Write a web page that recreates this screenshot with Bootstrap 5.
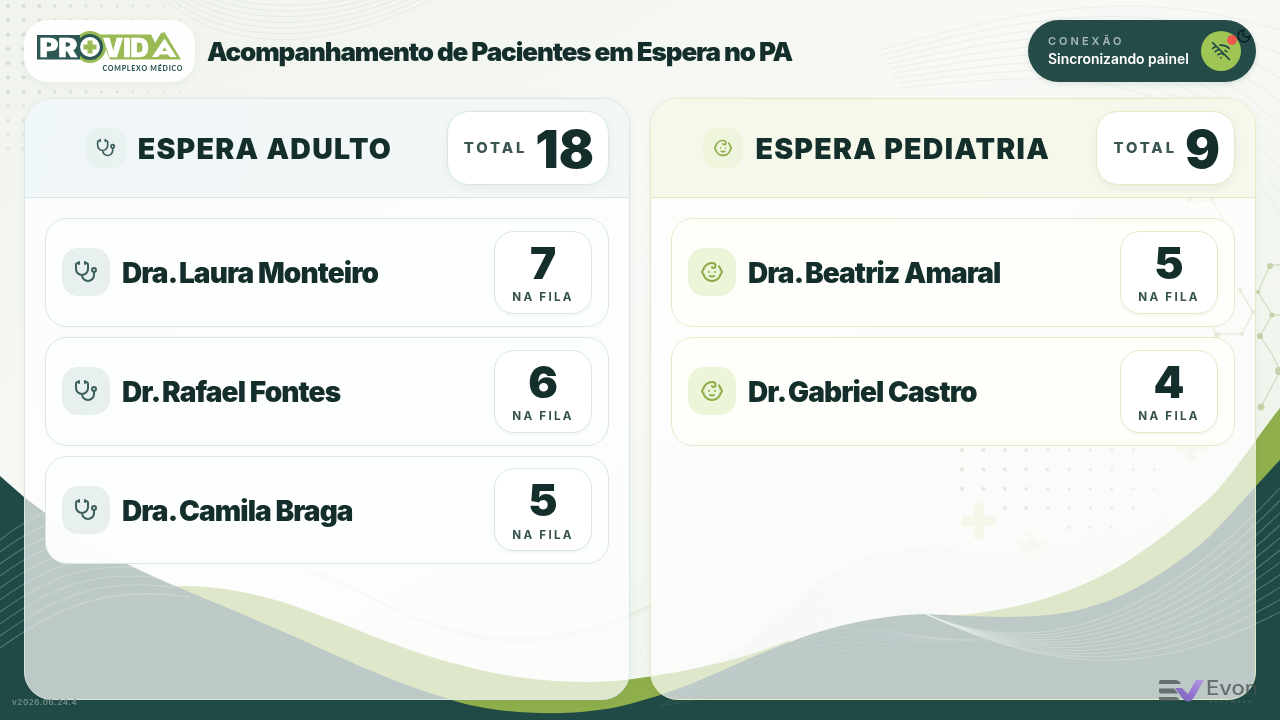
<!DOCTYPE html>
<html lang="pt-BR">
<head>
<meta charset="utf-8">
<meta name="viewport" content="width=device-width, initial-scale=1">
<title>Acompanhamento de Pacientes em Espera no PA</title>
<link rel="stylesheet" href="https://cdn.jsdelivr.net/npm/bootstrap@5.3.0/dist/css/bootstrap.min.css">
<style>
:root{--ink:#142f2b;--deep:#244b47;--line:#d9e6e6}
body{width:1280px;height:720px;overflow:hidden;font-family:Inter,sans-serif;color:var(--ink);background:#f5f7f2}
.scene{position:absolute;inset:0;z-index:-1}
.page{height:720px;padding:20px 24px}
.topbar{height:62px;margin-bottom:16px}
.logo-box{width:171px;height:62px;border-radius:24px;background:rgba(255,255,255,.9);box-shadow:0 3px 10px rgba(31,74,69,.06)}
.page-title{font-size:26px;font-weight:900;letter-spacing:-1.11px;margin-left:12px;padding-top:1px}
.conn{width:228px;height:62px;border-radius:31px;background:var(--deep);padding:0 15px 0 20px;color:#fff;box-shadow:0 2px 6px rgba(31,74,69,.12)}
.conn-label{font-size:11px;font-weight:600;letter-spacing:3px;line-height:14px;color:#a8b9b6}
.conn-text{font-size:13.9px;font-weight:600;line-height:20px;padding-top:1px}
.conn-icon{width:40px;height:40px;background:#9fc654;color:var(--deep)}
.conn-dot{position:absolute;right:4px;top:4px;width:10px;height:10px;background:#ee584c}
.moon{position:absolute;left:1236px;top:28px;color:#061d22}
.panels{height:602px;gap:20px}
.panel{flex:1 1 0;border:1px solid var(--line);border-radius:28px;background:rgba(255,255,255,.7);overflow:hidden;box-shadow:0 2px 8px rgba(31,74,69,.05)}
.panel-head{height:99px;padding:0 20px;background:linear-gradient(100deg,rgba(239,246,247,.95),rgba(242,247,246,.95));border-bottom:1px solid var(--line);gap:14px}
.panel-name{gap:12px}
.panel-title{font-size:28.5px;font-weight:900;letter-spacing:1.25px;line-height:1;padding-top:1.5px}
.ico{width:48px;height:48px;border-radius:16px;background:#e8f0ef;color:#3b5f5b;flex:none}
.ico-sm{width:40px;height:40px;border-radius:14px;background:#e9f1f1}
.total{height:74px;border:1px solid var(--line);border-radius:22px;background:#fefffe;padding:0 14px 0 16px;gap:8px;box-shadow:0 3px 8px rgba(31,74,69,.06)}
.total-label{font-size:14.8px;font-weight:800;letter-spacing:2.9px;color:#3b5652;padding-top:1px}
.total-num{font-size:52px;font-weight:900;letter-spacing:0;line-height:1;padding-top:3px}
.queue{padding:20px;gap:10px}
.doctor{height:108.8px;border:1px solid var(--line);border-radius:22px;background:rgba(253,255,254,.96);padding:0 16px;gap:12px}
.doctor-name{font-size:28px;font-weight:900;letter-spacing:-.9px;line-height:1;padding-top:2px}
.honorific{margin-right:-3px}
.count{width:98px;height:83px;border:1px solid var(--line);border-radius:20px;background:#fff;box-shadow:0 2px 3px rgba(31,74,69,.05)}
.count-num{font-size:44px;font-weight:900;line-height:44px;padding-top:9px}
.count-label{font-size:11.7px;font-weight:700;letter-spacing:2.2px;line-height:14px;margin-top:5.5px;color:#35514d}
.ped{--line:#e3eac6}
.ped .panel-head{background:rgba(244,248,234,.95)}
.ped .ico{background:#edf5d9;color:#8bab45}
.ped .ico-sm{background:#eff5dd}
.ped .doctor{background:rgba(254,255,250,.94)}
.version{position:absolute;left:12px;top:697px;font-size:8px;letter-spacing:.6px;line-height:10px;color:#78918d;font-weight:600}
.brand{position:absolute;left:1156px;top:674px}
.stroke-icon{fill:none;stroke:currentColor;stroke-width:2;stroke-linecap:round;stroke-linejoin:round}
</style>
</head>
<body>
<svg class="scene" width="1280" height="720" viewBox="0 0 1280 720">
  <defs>
    <linearGradient id="sky" x1="0" y1="0" x2="1" y2="1"><stop offset="0" stop-color="#f0f4ec"/><stop offset=".45" stop-color="#f8f9f6"/><stop offset="1" stop-color="#eaf2e6"/></linearGradient>
    <linearGradient id="hill" x1="0" y1="0" x2="1" y2="0"><stop offset="0" stop-color="#dfe5df"/><stop offset="1" stop-color="#edf2e8" stop-opacity=".3"/></linearGradient>
  </defs>
  <rect width="1280" height="720" fill="url(#sky)"/>
  <path d="M701 667C790 640 800 545 940 547C1080 560 1120 520 1280 470V720H701Z" fill="url(#hill)" opacity=".8"/>
  <g id="dots"></g>
  <g id="faint" fill="none" stroke="#dfe5d8" stroke-width="1"></g>
  <g fill="#cfe0a9" opacity=".75"><path d="M974 503h10v13h12v10h-12v13h-10v-13h-12v-10h12z"/><path d="M1028 533h7v8h9v7h-9v8h-7v-8h-9v-7h9z" opacity=".6"/><path d="M1187 435h9v9h11v7h-11v9h-9v-9h-11v-7h11z" opacity=".7"/></g>
  <g stroke="#d3dcc3" stroke-width="1.3" fill="#c5d2aa">
    <path fill="none" d="M1280 265H1270L1258 292L1272 315L1260 336L1272 354L1280 371L1261 407M1272 315H1280"/>
    <path fill="none" stroke="#b4c48c" stroke-width="1.6" d="M1240 290L1253 312L1242 334H1217L1208 320"/>
    <path fill="none" d="M1189 200H1212L1225 222"/>
    <g stroke="none"><circle cx="1270" cy="266" r="3"/><circle cx="1258" cy="292" r="2"/><circle cx="1272" cy="315" r="2.6"/><circle cx="1260" cy="336" r="3"/><circle cx="1279" cy="371" r="4"/><circle cx="1261" cy="407" r="3.4"/><circle cx="1189" cy="200" r="2"/><circle cx="1212" cy="200" r="2"/></g>
    <g stroke="none" fill="#a5b878"><circle cx="1240" cy="290" r="2"/><circle cx="1253" cy="312" r="2"/><circle cx="1242" cy="334" r="2"/><circle cx="1217" cy="335" r="3"/></g>
  </g>
  <path fill="#8fae4c" d="M165 587C205 583 245 591 286 603C350 625 405 652 461 665C520 682 590 686 640 678C695 670 740 660 790 640V720H165Z"/>
  <path fill="#8fae4c" d="M950 616C1010 611 1060 598 1109 572C1140 556 1185 520 1211 497C1235 472 1262 430 1280 408V720H950Z"/>
  <path fill="#1f4a45" d="M0 476L24 497Q80 540 127 564C180 590 240 612 302 640C350 662 400 685 449 699C500 717 590 718 640 701C690 688 735 663 787 643C830 626 880 615 926 614C970 616 1045 622 1089 607C1130 597 1180 563 1211 535C1240 505 1258 483 1280 460V720H0Z"/>
  <g id="threads" fill="none" stroke="#b5ccc0" stroke-width="1.1"></g>
</svg>

<svg width="0" height="0" class="position-absolute">
  <symbol id="steth" viewBox="0 0 24 24"><path d="M11 2v2M5 2v2M5 3H4a2 2 0 0 0-2 2v4a6 6 0 0 0 12 0V5a2 2 0 0 0-2-2h-1M8 15a6 6 0 0 0 12 0v-3"/><circle cx="20" cy="10" r="2"/></symbol>
  <symbol id="baby" viewBox="0 0 24 24"><path d="M9 12h.01M15 12h.01M10 16c.5.3 1.2.5 2 .5s1.5-.2 2-.5M19 6.3a9 9 0 0 1 1.8 3.9 2 2 0 0 1 0 3.6 9 9 0 0 1-17.6 0 2 2 0 0 1 0-3.6A9 9 0 0 1 12 3c2 0 3.5 1.1 3.5 2.5s-.9 2.5-2 2.5c-.8 0-1.5-.4-1.5-1"/></symbol>
</svg>

<div class="page">
  <header class="topbar d-flex align-items-center">
    <div class="logo-box">
      <svg width="171" height="62" viewBox="24 20 171 62" font-family="Inter,sans-serif">
        <circle cx="90" cy="47" r="16" fill="#9aba55"/>
        <path d="M99 34.500H158L164.500 32L181 59.500H110Z" fill="#9aba55"/>
        <path d="M151 34L160.500 34L155 43Z" fill="#fff"/>
        <path d="M37 35H80V59.500H37Z" fill="#2c5753"/>
        <g font-weight="900" font-size="25.500" fill="#fff" stroke="#fff" stroke-width=".6">
          <text x="39.500" y="56.500" textLength="38" lengthAdjust="spacingAndGlyphs">PR</text>
          <text x="103" y="56.500" textLength="46" lengthAdjust="spacingAndGlyphs">VID</text>
        </g>
        <circle cx="90" cy="47" r="11.500" fill="#fff" stroke="#2c5753" stroke-width="3.200"/>
        <path d="M87.500 40.500h5v4h4v5h-4v4h-5v-4h-4v-5h4z" fill="#9aba55"/>
        <path d="M164.500 38.500L152 57H158L160 54.500H168L170 57H176.500Z" fill="#fff"/><path d="M164.500 47.500l2.500 3.500h-5z" fill="#9aba55"/>
        <text x="102.500" y="71" font-family="Lato,sans-serif" font-weight="900" font-size="7" fill="#2c5753" textLength="80">COMPLEXO MÉDICO</text>
      </svg>
    </div>
    <h1 class="page-title mb-0">Acompanhamento de Pacientes em Espera no PA</h1>
    <div class="conn d-flex align-items-center justify-content-between ms-auto">
      <div><div class="conn-label">CONEXÃO</div><div class="conn-text text-nowrap">Sincronizando painel</div></div>
      <div class="conn-icon rounded-circle position-relative d-flex align-items-center justify-content-center">
        <svg class="stroke-icon" width="20" height="20" viewBox="0 0 24 24"><path d="M12 20h.01M8.500 16.429a5 5 0 0 1 7 0M5 12.859a10 10 0 0 1 5.170-2.690M19 12.859a10 10 0 0 0-2.007-1.523M2 8.820a15 15 0 0 1 4.177-2.643M22 8.820a15 15 0 0 0-11.288-3.764M2 2l20 20"/></svg>
        <span class="conn-dot rounded-circle"></span>
      </div>
    </div>
  </header>

  <main class="panels d-flex">
    <section class="panel">
      <div class="panel-head d-flex align-items-center">
        <div class="panel-name d-flex align-items-center justify-content-center flex-grow-1">
          <div class="ico ico-sm d-flex align-items-center justify-content-center"><svg class="stroke-icon" width="20" height="20"><use href="#steth"/></svg></div>
          <h2 class="panel-title mb-0">ESPERA ADULTO</h2>
        </div>
        <div class="total d-flex align-items-center"><span class="total-label">TOTAL</span><span class="total-num">18</span></div>
      </div>
      <div class="queue d-flex flex-column">
        <article class="doctor d-flex align-items-center">
          <div class="ico d-flex align-items-center justify-content-center"><svg class="stroke-icon" width="24" height="24"><use href="#steth"/></svg></div>
          <h3 class="doctor-name mb-0"><span class="honorific">Dra.</span> Laura Monteiro</h3>
          <div class="count ms-auto text-center"><div class="count-num">7</div><div class="count-label">NA FILA</div></div>
        </article>
        <article class="doctor d-flex align-items-center">
          <div class="ico d-flex align-items-center justify-content-center"><svg class="stroke-icon" width="24" height="24"><use href="#steth"/></svg></div>
          <h3 class="doctor-name mb-0"><span class="honorific">Dr.</span> Rafael Fontes</h3>
          <div class="count ms-auto text-center"><div class="count-num">6</div><div class="count-label">NA FILA</div></div>
        </article>
        <article class="doctor d-flex align-items-center">
          <div class="ico d-flex align-items-center justify-content-center"><svg class="stroke-icon" width="24" height="24"><use href="#steth"/></svg></div>
          <h3 class="doctor-name mb-0"><span class="honorific">Dra.</span> Camila Braga</h3>
          <div class="count ms-auto text-center"><div class="count-num">5</div><div class="count-label">NA FILA</div></div>
        </article>
      </div>
    </section>
    <section class="panel ped">
      <div class="panel-head d-flex align-items-center">
        <div class="panel-name d-flex align-items-center justify-content-center flex-grow-1">
          <div class="ico ico-sm d-flex align-items-center justify-content-center"><svg class="stroke-icon" width="20" height="20"><use href="#baby"/></svg></div>
          <h2 class="panel-title mb-0">ESPERA PEDIATRIA</h2>
        </div>
        <div class="total d-flex align-items-center"><span class="total-label">TOTAL</span><span class="total-num">9</span></div>
      </div>
      <div class="queue d-flex flex-column">
        <article class="doctor d-flex align-items-center">
          <div class="ico d-flex align-items-center justify-content-center"><svg class="stroke-icon" width="24" height="24"><use href="#baby"/></svg></div>
          <h3 class="doctor-name mb-0"><span class="honorific">Dra.</span> Beatriz Amaral</h3>
          <div class="count ms-auto text-center"><div class="count-num">5</div><div class="count-label">NA FILA</div></div>
        </article>
        <article class="doctor d-flex align-items-center">
          <div class="ico d-flex align-items-center justify-content-center"><svg class="stroke-icon" width="24" height="24"><use href="#baby"/></svg></div>
          <h3 class="doctor-name mb-0"><span class="honorific">Dr.</span> Gabriel Castro</h3>
          <div class="count ms-auto text-center"><div class="count-num">4</div><div class="count-label">NA FILA</div></div>
        </article>
      </div>
    </section>
  </main>
</div>

<svg class="moon stroke-icon" width="16" height="16" viewBox="0 0 24 24"><path d="M12 3a6 6 0 0 0 9 9 9 9 0 1 1-9-9Z"/></svg>
<div class="version">v2026.06.24.4</div>
<svg class="brand" width="124" height="34" viewBox="1156 674 124 34">
  <defs><linearGradient id="vio" x1="0" y1="1" x2="1" y2="0"><stop offset="0" stop-color="#7c62b8"/><stop offset=".5" stop-color="#9274cf"/><stop offset="1" stop-color="#b39ae0"/></linearGradient></defs>
  <g fill="#4a5053" fill-opacity=".75"><path d="M1161 680h14q4 0 6 4h-22v-2q0-2 2-2z"/><path d="M1159 688.500h15l4 5h-17q-2 0-2-2z"/><path d="M1159 697h17q3 1 4 4h-19q-2 0-2-2z"/></g>
  <path d="M1175 688h7l6 6 8-14h8l-11 19q-5 5-10 0z" fill="url(#vio)"/>
  <text x="1206" y="695" font-family="Inter,sans-serif" font-size="19.500" font-weight="500" fill="#4a5053" fill-opacity=".75" textLength="52" lengthAdjust="spacingAndGlyphs">Evon</text>
  <text x="1209" y="702.500" font-family="Inter,sans-serif" font-size="4" fill="#6f7f7d" fill-opacity=".7" textLength="42">SOFTWARE</text>
</svg>

<script>
const NS='http://www.w3.org/2000/svg';
// Draws n curves that blend from curve a to curve b (point lists of one cubic each).
function fan(id,a,b,n,opacity){
  const g=document.getElementById(id);
  for(let i=0;i<n;i++){
    const t=i/(n-1),p=a.map((v,k)=>(v+(b[k]-v)*t).toFixed(1));
    const el=document.createElementNS(NS,'path');
    el.setAttribute('d',`M${p[0]} ${p[1]}C${p.slice(2).join(' ')}`);
    el.setAttribute('opacity',opacity);
    g.append(el);
  }
}
fan('threads',[0,540,15,528,35,516,50,511],[0,648,60,605,110,585,190,597],10,.34);
fan('threads',[926,614,1010,650,1130,650,1280,488],[926,614,1050,672,1150,680,1280,612],11,.36);
fan('threads',[690,684,760,640,830,610,930,640],[660,706,770,690,820,640,990,640],7,.14);
fan('faint',[165,0,230,55,330,50,430,0],[200,-10,250,10,320,10,380,-8],7,.7);
fan('faint',[880,50,1080,-10,1180,0,1280,30],[900,88,1080,70,1190,60,1290,230],9,.5);
fan('faint',[300,570,400,600,480,680,640,610],[330,575,420,620,520,700,700,580],7,.4);
fan('faint',[640,650,740,560,840,560,930,614],[640,690,760,600,850,610,930,614],8,.4);
// Halftone dots that grow fainter towards the far edge.
function dots(x0,y0,dx,dy,rowSizes,color){
  const g=document.getElementById('dots');
  rowSizes.forEach(([from,to],r)=>{
    for(let c=from;c<to;c++){
      const el=document.createElementNS(NS,'circle');
      el.setAttribute('cx',x0+c*dx);el.setAttribute('cy',y0+r*dy);
      el.setAttribute('r',2.1-c*.08);el.setAttribute('fill',color);
      el.setAttribute('opacity',(.9-c*.04)*(r>6?.6:1));
      g.append(el);
    }
  });
}
dots(8,6,15.6,14.3,[[0,12],[0,12],[0,12],[0,12],[0,12],[0,12],[0,12],[0,9],[0,7],[0,4],[0,2]],'#d3dbd1');
dots(962,450,21.4,19.4,[[0,9],[0,10],[0,10],[2,9],[5,8]],'#8fa892');
</script>
<script src="https://cdn.jsdelivr.net/npm/bootstrap@5.3.0/dist/js/bootstrap.bundle.min.js"></script>
</body>
</html>
